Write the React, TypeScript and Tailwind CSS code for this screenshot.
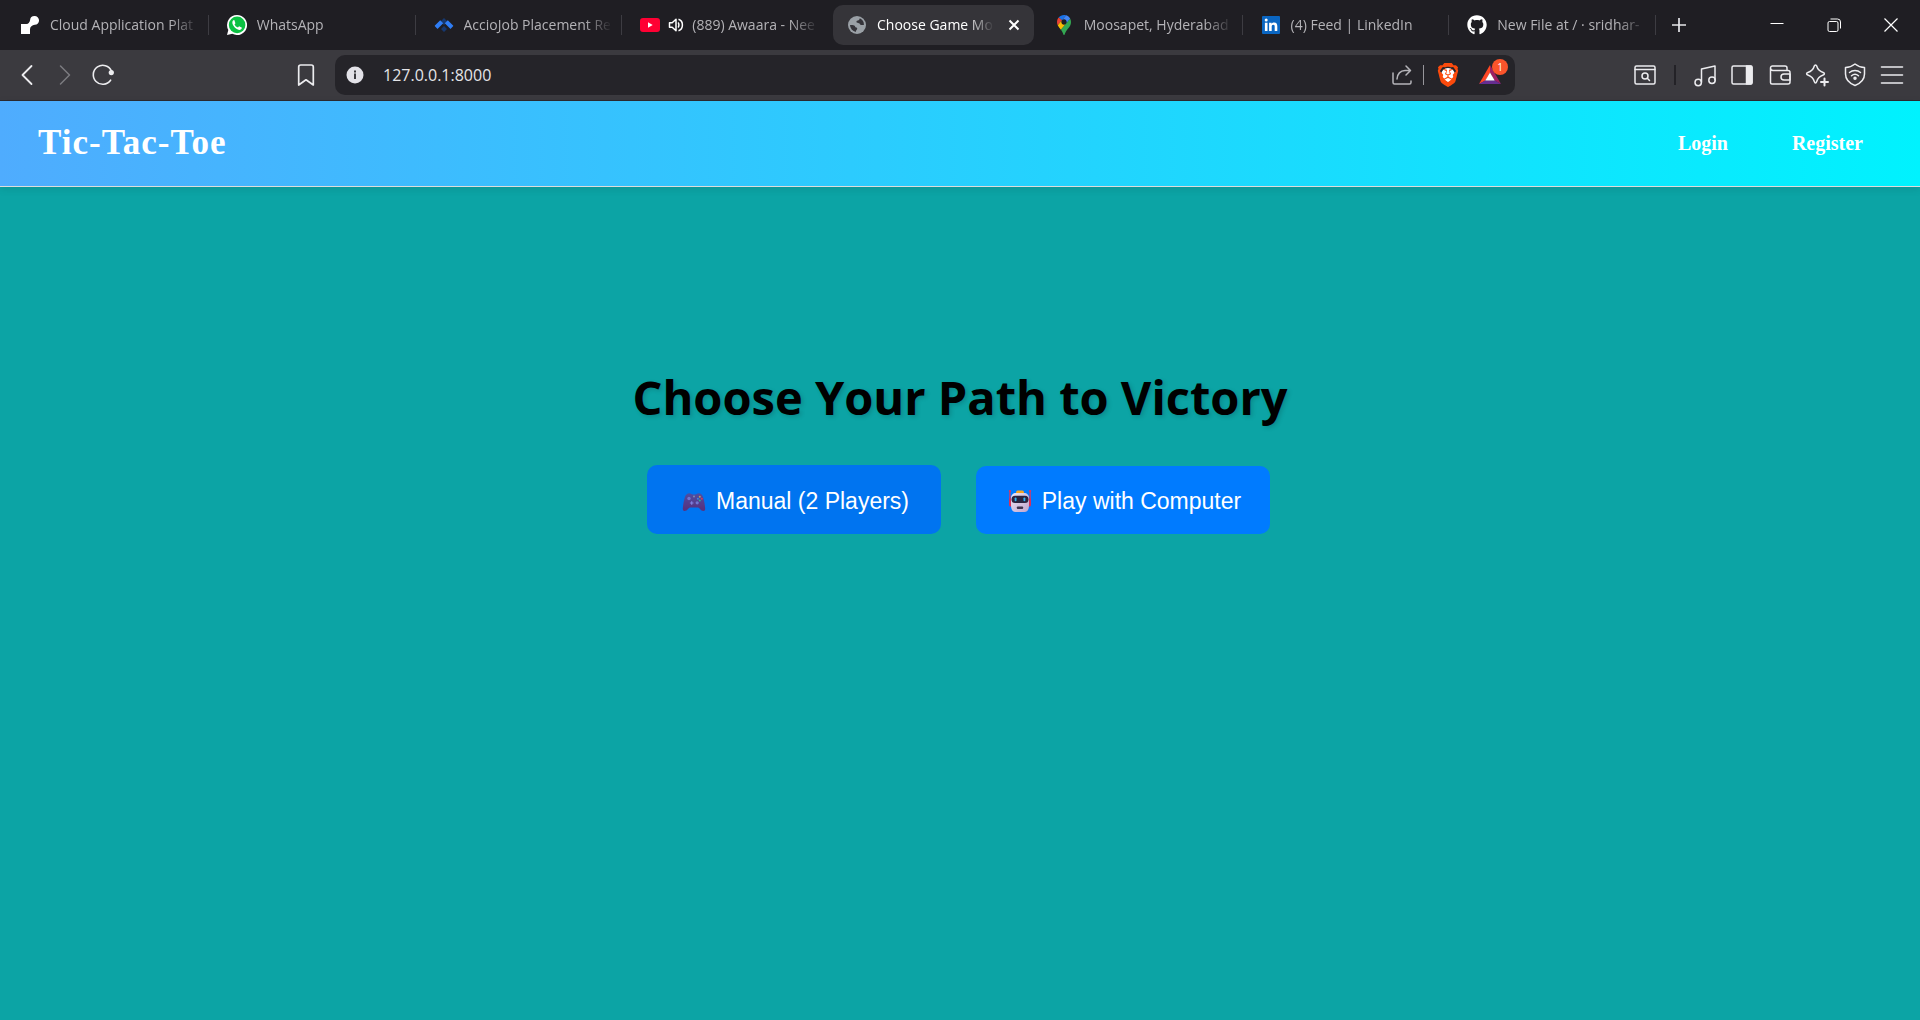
import React from "react";
import { FaGithub } from "react-icons/fa";
import { SiBrave } from "react-icons/si";

type IconProps = { children: React.ReactNode; className?: string; box?: string };

function Line({ children, className = "size-6", box = "0 0 24 24" }: IconProps) {
  return (
    <svg
      viewBox={box}
      className={className}
      fill="none"
      stroke="currentColor"
      strokeWidth="1.5"
      strokeLinecap="round"
      strokeLinejoin="round"
      aria-hidden="true"
    >
      {children}
    </svg>
  );
}

const RenderLogo = () => (
  <svg viewBox="0 0 20 20" className="size-5" fill="#fff" aria-hidden="true">
    <path d="M14.500 1a4.400 4.400 0 0 1 .3 8.800c-2.600.2-4.800 2-4.800 4.500V19H1V9h5.500c2 0 3.300-1.500 3.600-3.900A4.400 4.400 0 0 1 14.500 1z" />
  </svg>
);

const WhatsAppLogo = () => (
  <svg viewBox="0 0 20 20" className="size-5" aria-hidden="true">
    <path d="M10 0a10 10 0 1 1-4.700 18.800L0 20l1.300-5.100A10 10 0 0 1 10 0z" fill="#fff" />
    <circle cx="10.100" cy="9.900" r="8.300" fill="#0cc143" />
    <path
      d="M7.200 5.100c-.4-.1-.9.100-1.200.5-1.300 1.500-.6 3.700.8 5.600 1.500 2.100 3.600 3.500 5.500 3.700 1.200.1 2.300-.7 2.500-1.600.1-.5.100-.8-.2-.9l-2.100-1c-.3-.1-.5 0-.7.200l-.8 1c-1.600-.6-2.700-1.600-3.500-3.100l.8-1c.1-.2.100-.4 0-.6l-.8-2.300c-.1-.3-.2-.4-.3-.5z"
      fill="#fff"
    />
  </svg>
);

const AccioLogo = () => (
  <svg viewBox="0 0 20 16" className="h-4 w-5" aria-hidden="true">
    <path d="M10 1l3.500 3.500L10 8 6.500 4.500zM10 9l3 3-3 3-3-3z" fill="#16386f" />
    <path d="M6.200 3.200l3 3-5.700 5.700-2.600-2.600a.6.6 0 0 1 0-.8zM13.800 3.200l-3 3 5.700 5.700 2.600-2.600a.6.6 0 0 0 0-.8z" fill="#2f7df4" />
  </svg>
);

const YouTubeLogo = () => (
  <svg viewBox="0 0 20 14" className="h-3.5 w-5" aria-hidden="true">
    <rect width="20" height="14" rx="3" fill="#ff0033" />
    <path d="M8 4.300v5.400L12.700 7z" fill="#fff" />
  </svg>
);

const GlobeLogo = () => (
  <svg viewBox="0 0 18 18" className="size-[18px]" aria-hidden="true">
    <circle cx="9" cy="9" r="9" fill="#9aa0a6" />
    <path
      d="M11.800 2.200c-.2 1.300-.8 2-2 2.200-1.200.1-1.500.9-1.200 1.800.3.800 1.300.7 2.300 1 1.200.3 1 1.500 2.300 1.700 1 .2 2 .2 2.700.1a7 7 0 0 0-4.100-6.800zM2 9c1.700 0 3.200.1 4.200.6 1.300.7.700 1.700 2 2 1.300.2 1.200 1 .7 1.800-.4.800-1.200 1-1 2.500A7 7 0 0 1 2 9z"
      fill="#35343a"
    />
  </svg>
);

const MapsLogo = () => (
  <svg viewBox="0 0 92.3 132.3" className="h-5 w-3.5" aria-hidden="true">
    <path fill="#1a73e8" d="M60.2 2.2C55.8.8 51 0 46.1 0 32 0 19.3 6.4 10.8 16.5l21.800 18.300L60.200 2.200z" />
    <path fill="#ea4335" d="M10.8 16.5C4.1 24.5 0 34.900 0 46.100c0 8.700 1.700 15.700 4.600 22l28-33.300-21.800-18.300z" />
    <path fill="#4285f4" d="M46.2 28.5c9.800 0 17.700 7.900 17.700 17.700 0 4.300-1.600 8.300-4.200 11.400 0 0 13.900-16.600 27.500-32.700-5.600-10.800-15.300-19-27-22.700L32.600 34.800c3.300-3.800 8.100-6.300 13.600-6.300" />
    <path fill="#fbbc04" d="M46.2 63.8c-9.800 0-17.700-7.900-17.700-17.700 0-4.300 1.500-8.300 4.100-11.300l-28 33.300c4.800 10.600 12.800 19.200 21 29.900l34.100-40.500c-3.300 3.900-8.100 6.300-13.500 6.300" />
    <path fill="#34a853" d="M59.1 109.2c15.400-24.100 33.300-35 33.300-63 0-7.700-1.900-14.900-5.200-21.300L25.600 98c2.600 3.400 5.300 7.300 7.900 11.300 9.400 14.500 6.800 23.100 12.800 23.100s3.400-8.700 12.800-23.200" />
  </svg>
);

const LinkedInLogo = () => (
  <svg viewBox="0 0 18 18" className="size-[18px]" aria-hidden="true">
    <rect width="18" height="18" rx="1" fill="#0a66c2" />
    <circle cx="4.200" cy="4" r="1.500" fill="#fff" />
    <path
      d="M2.900 6.700h2.600V15H2.900zM7.100 6.700h2.500v1.200c.5-.9 1.400-1.400 2.600-1.400 2.300 0 3.100 1.500 3.100 3.700V15h-2.600v-4.300c0-1.100-.2-2-1.400-2-1.200 0-1.600.9-1.600 2V15H7.100z"
      fill="#fff"
    />
  </svg>
);

const SpeakerIcon = () => (
  <svg viewBox="0 0 16 16" className="size-4" fill="none" stroke="#fff" strokeWidth="1.5" aria-hidden="true">
    <path d="M1.500 5.700h2.700L8 2.300v11.400l-3.800-3.400H1.500z" strokeLinejoin="round" />
    <path d="M10 5.500c1.200.9 1.200 4.100 0 5M10.500 2.300c5.200 1.500 5.200 9.900 0 11.400" />
  </svg>
);

type Tab = {
  title: string;
  icon: React.ReactNode;
  active?: boolean;
  audible?: boolean;
  divider?: boolean;
};

const tabs: Tab[] = [
  { title: "Cloud Application Plat", icon: <RenderLogo />, divider: true },
  { title: "WhatsApp", icon: <WhatsAppLogo />, divider: true },
  { title: "AccioJob Placement Re", icon: <AccioLogo />, divider: true },
  { title: "(889) Awaara - Nee", icon: <YouTubeLogo />, audible: true },
  { title: "Choose Game Mo", icon: <GlobeLogo />, active: true },
  { title: "Moosapet, Hyderabad", icon: <MapsLogo />, divider: true },
  { title: "(4) Feed | LinkedIn", icon: <LinkedInLogo />, divider: true },
  { title: "New File at / · sridhar-", icon: <FaGithub className="size-5 text-white" />, divider: true },
];

function TabItem({ tab }: { tab: Tab }) {
  const shell = tab.active ? "bg-[#353439] text-white" : "text-[#b4b3b7]";
  return (
    <div className="flex h-10 min-w-0 flex-1 items-center">
      <div className={"ml-1 mr-px flex h-10 min-w-0 flex-1 items-center rounded-[10px] pl-3 " + shell}>
        <button type="button" className="flex min-w-0 flex-1 items-center text-left">
          <span className="flex w-6 shrink-0 items-center justify-center">{tab.icon}</span>
          {tab.audible && (
            <span className="ml-1.5 shrink-0">
              <SpeakerIcon />
            </span>
          )}
          <span className="ml-2 min-w-0 flex-1 overflow-hidden whitespace-nowrap [mask-image:linear-gradient(to_right,black_calc(100%-28px),transparent)]">
            {tab.title}
          </span>
        </button>
        {tab.active ? (
          <button type="button" aria-label="Close tab" className="ml-2 mr-2 flex size-6 items-center justify-center">
            <svg viewBox="0 0 12 12" className="size-3" stroke="#fff" strokeWidth="2" aria-hidden="true">
              <path d="M1.500 1.500l9 9M10.500 1.500l-9 9" />
            </svg>
          </button>
        ) : (
          <span className="w-2" />
        )}
      </div>
      <span className={"h-5 w-px " + (tab.divider ? "bg-[#3d3c42]" : "")} />
    </div>
  );
}

function TabStrip() {
  return (
    <div className="flex h-[50px] items-center bg-[#1f1e23] pl-0.5 text-sm text-white">
      <div className="flex min-w-0 flex-1">
        {tabs.map((t) => (
          <TabItem key={t.title} tab={t} />
        ))}
      </div>
      <div className="flex w-[264px] shrink-0 items-center pr-px">
        <button type="button" aria-label="New tab" className="ml-[11px] flex size-6 items-center justify-center">
          <svg viewBox="0 0 14 14" className="size-3.5" stroke="#e6e6e9" strokeWidth="1.700" aria-hidden="true">
            <path d="M7 0v14M0 7h14" />
          </svg>
        </button>
        <div className="ml-auto flex">
          <button type="button" aria-label="Minimize" className="flex h-10 w-[57px] items-center justify-center">
            <svg viewBox="0 0 14 14" className="size-3.5" stroke="#fff" aria-hidden="true">
              <path d="M0.500 5.500h13" />
            </svg>
          </button>
          <button type="button" aria-label="Restore" className="flex h-10 w-[57px] items-center justify-center">
            <svg viewBox="0 0 14 14" className="size-3.5" fill="none" stroke="#fff" aria-hidden="true">
              <rect x="1" y="3.500" width="10" height="10" rx="1.500" />
              <path d="M3.500 1h7a3 3 0 0 1 3 3v6.500" />
            </svg>
          </button>
          <button type="button" aria-label="Close" className="flex h-10 w-[57px] items-center justify-center">
            <svg viewBox="0 0 14 14" className="size-3.5" stroke="#fff" strokeWidth="1.200" aria-hidden="true">
              <path d="M0.500 0.500l13 13M13.500 0.500l-13 13" />
            </svg>
          </button>
        </div>
      </div>
    </div>
  );
}

const BatLogo = () => (
  <svg viewBox="0 0 24 20" className="h-5 w-6" aria-hidden="true">
    <path d="M12 0L1 19l6.500-3.500L12 7.500z" fill="#ff4724" />
    <path d="M12 0l11 19-6.500-3.500L12 7.500z" fill="#9e1f63" />
    <path d="M1 19h22l-6.500-3.800h-9z" fill="#662d91" />
    <path d="M12 7.500l4.700 8H7.300z" fill="#fff" />
  </svg>
);

function NavButton({ label, children }: { label: string; children: React.ReactNode }) {
  return (
    <button type="button" aria-label={label} className="flex h-10 w-[38px] shrink-0 items-center justify-center">
      {children}
    </button>
  );
}

function Toolbar() {
  return (
    <div className="flex h-[51px] items-center border-b border-[#2c2b30] bg-[#3b3a3f] text-[#ececef]">
      <div className="flex w-[335px] shrink-0 items-center pl-2 pr-2.5">
        <NavButton label="Back">
          <Line><path d="M16.500 3L7.500 12l9 9" strokeWidth="1.800" /></Line>
        </NavButton>
        <NavButton label="Forward">
          <Line className="size-6 text-[#7c7b80]"><path d="M7.500 3l9 9-9 9" /></Line>
        </NavButton>
        <NavButton label="Reload">
          <Line>
            <path d="M19.600 17.200A9.500 9.500 0 1 1 20.500 8" strokeWidth="1.600" />
            <circle cx="20.300" cy="9.600" r="2.600" fill="currentColor" stroke="none" />
          </Line>
        </NavButton>
        <span className="flex-1" />
        <NavButton label="Bookmark">
          <Line><path d="M4.700 22V4a2 2 0 0 1 2-2h10.600a2 2 0 0 1 2 2v18L12 16.800z" strokeWidth="1.700" /></Line>
        </NavButton>
      </div>

      <div className="flex h-10 min-w-0 flex-1 items-center rounded-[10px] bg-[#252429] pl-2.5 pr-3">
        <button type="button" aria-label="Site information" className="flex size-5 items-center justify-center">
          <svg viewBox="0 0 18 18" className="size-[18px]" aria-hidden="true">
            <circle cx="9" cy="9" r="8.500" fill="#e3e2e8" />
            <path d="M8 7.500h2v5.500H8zM8 4.500h2v2H8z" fill="#3b3a3f" />
          </svg>
        </button>
        <input
          aria-label="Address"
          defaultValue="127.0.0.1:8000"
          className="ml-[18px] min-w-0 flex-1 bg-transparent text-base text-[#e4e4e8] outline-none"
        />
        <button type="button" aria-label="Share" className="flex size-6 items-center justify-center text-[#b5b4b9]">
          <Line>
            <path d="M3 10v9.500a1.500 1.500 0 0 0 1.500 1.500h15a1.500 1.500 0 0 0 1.500-1.500V18" />
            <path d="M7 16c.2-5 3.500-8.500 8-8.500h5M16 3l4.500 4.500L16 12" />
          </Line>
        </button>
        <span className="mx-[9px] h-5 w-px bg-[#97969b]" />
        <button type="button" aria-label="Brave Shields" className="ml-[3px] flex size-6 items-center justify-center">
          <span className="relative flex size-6 items-center justify-center">
            <span className="absolute size-3.5 rounded-full bg-white" />
            <SiBrave className="relative size-6 text-[#fb4a0c]" />
          </span>
        </button>
        <button type="button" aria-label="Brave Rewards" className="relative ml-[18px] mr-px flex size-6 items-center justify-center">
          <BatLogo />
          <span className="absolute -top-1 left-3.5 flex size-4 items-center justify-center rounded-full bg-[#fb542b] text-[10px] leading-none text-white">
            1
          </span>
        </button>
      </div>

      <div className="flex w-[405px] shrink-0 items-center justify-end pr-4">
        <button type="button" aria-label="Search tabs">
          <Line>
            <rect x="2" y="3" width="20" height="18" rx="1.500" />
            <path d="M2 6.500h20" strokeWidth="1.300" />
            <circle cx="12" cy="13" r="3" />
            <path d="M14.300 15.300L16.500 17.500" />
          </Line>
        </button>
        <span className="mx-[17px] h-5 w-0.5 bg-[#232227]" />
        <div className="flex w-[211px] items-center justify-between">
          <button type="button" aria-label="Playlist">
            <Line>
              <circle cx="5.200" cy="19.500" r="3.200" />
              <circle cx="19" cy="17.300" r="3.200" />
              <path d="M8.500 19V6L22 3v14" />
            </Line>
          </button>
          <button type="button" aria-label="Sidebar">
            <Line>
              <rect x="2" y="3" width="20" height="18" rx="1.500" />
              <path d="M16.500 3h4a1.500 1.500 0 0 1 1.500 1.500v15a1.500 1.500 0 0 1-1.500 1.500h-4z" fill="currentColor" />
            </Line>
          </button>
          <button type="button" aria-label="Wallet">
            <Line>
              <path d="M2.500 5v14.500A1.500 1.500 0 0 0 4 21h16a2 2 0 0 0 2-2V9.500a2 2 0 0 0-2-2H5A2.500 2.500 0 0 1 2.500 5 2 2 0 0 1 4.500 3H17a2 2 0 0 1 2 2v2.500" />
              <path d="M22 11h-6a3 3 0 0 0 0 6h6z" />
            </Line>
          </button>
          <button type="button" aria-label="Leo AI">
            <Line>
              <path d="M10.500 2c.8 0 1 .3 1.200 1 .9 3.300 2 5 6.500 6.500 1.600.5 1.600 2 0 2.500-4.500 1.500-5.600 3.200-6.500 6.500-.2.700-.4 1.500-1.200 1.500s-1-.8-1.200-1.500C8.400 15.200 7.300 13.500 2.800 12c-1.600-.5-1.600-2 0-2.500C7.300 8 8.400 6.300 9.300 3c.2-.7.4-1 1.200-1z" />
              <path d="M19.500 15.500v7M16 19h7" strokeWidth="2" />
            </Line>
          </button>
          <button type="button" aria-label="VPN">
            <Line>
              <path d="M12 1c2.500 2 6 3.500 9.500 3.500v6.500c0 5.500-4.500 9.500-9.500 11.500C7 20.500 2.500 16.500 2.500 11V4.500C6 4.500 9.500 3 12 1z" />
              <path d="M6.500 9.500c3-2.600 8-2.600 11 0M8.500 12.700c2-1.700 5-1.700 7 0" />
              <circle cx="12" cy="15.300" r="1" fill="currentColor" />
            </Line>
          </button>
          <button type="button" aria-label="Menu">
            <Line><path d="M1.500 4h21M1.500 12h21M1.500 20h21" strokeWidth="1.600" /></Line>
          </button>
        </div>
      </div>
    </div>
  );
}

const GamepadIcon = () => (
  <svg viewBox="0 0 24 24" className="size-6 opacity-90" aria-hidden="true">
    <defs>
      <linearGradient id="pad" x1="0" y1="0" x2="0" y2="1">
        <stop offset="0" stopColor="#574b9c" />
        <stop offset="1" stopColor="#63286f" />
      </linearGradient>
    </defs>
    <path
      d="M5 5c1-1 3-1.200 4-.2.600.5 1 .7 3 .7s2.400-.2 3-.7c1-1 3-.8 4 .2 1 .9 1.600 1.500 2.200 3.500.9 3 1.800 7.500 2 11 .1 1.700-.6 2.500-1.700 2.500-1.500 0-2.500-.8-3.700-2.200-.8-.9-1.400-1.200-2.800-1.200H9c-1.400 0-2 .3-2.800 1.200C5 21.200 4 22 2.500 22 1.400 22 .7 21.200.8 19.500c.2-3.500 1.100-8 2-11C3.400 6.500 4 5.900 5 5z"
      fill="url(#pad)"
    />
    <circle cx="7" cy="9.500" r="1.700" fill="#7d76cf" />
    <circle cx="15.200" cy="13.800" r="1.600" fill="#7d76cf" />
    <path d="M9.700 12.200v3.600M7.900 14h3.600" stroke="#8f86e0" strokeWidth="1.200" />
    <circle cx="12" cy="7.500" r="1" fill="#8d8fa8" />
    <circle cx="17.800" cy="7.700" r="1" fill="#d3a245" />
    <circle cx="19.800" cy="9.700" r="1" fill="#ea3550" />
    <circle cx="15.900" cy="9.700" r="1" fill="#3e8ce0" />
    <circle cx="17.800" cy="11.500" r="1" fill="#39b58a" />
  </svg>
);

const RobotIcon = () => (
  <svg viewBox="0 0 24 24" className="size-6" aria-hidden="true">
    <defs>
      <linearGradient id="bot" x1="0" y1="0" x2="1" y2="1">
        <stop offset="0" stopColor="#eee6f5" />
        <stop offset="1" stopColor="#bea4cd" />
      </linearGradient>
    </defs>
    <path d="M1.900 2v13M22.100 2v13" stroke="#e2355f" strokeWidth="1.200" />
    <path d="M1 9.500h3v8H2.500A1.500 1.500 0 0 1 1 16zM23 9.500h-3v8h1.500A1.500 1.500 0 0 0 23 16z" fill="#d6305c" />
    <circle cx="1.900" cy="2" r="1.100" fill="#e2355f" />
    <circle cx="22.100" cy="2" r="1.100" fill="#e2355f" />
    <path d="M8 4c0-1.500.5-2.500 1.500-2.500h5C15.500 1.500 16 2.500 16 4z" fill="#f5a623" />
    <path d="M8 4h8c3 0 5 2 5 5v7c0 4.500-1.500 7-4.500 7h-9C4.500 23 3 20.500 3 16V9c0-3 2-5 5-5z" fill="url(#bot)" />
    <rect x="3.500" y="6.700" width="17" height="7.300" rx="3.500" fill="#2b2440" />
    <rect x="6.700" y="8.500" width="1.800" height="3.800" rx="0.800" fill="#31b4f2" />
    <rect x="15.500" y="8.500" width="1.800" height="3.800" rx="0.800" fill="#31b4f2" />
    <rect x="8.900" y="17.500" width="6.200" height="2.600" rx="0.800" fill="#40334f" />
  </svg>
);

function Page() {
  return (
    <div className="flex flex-1 flex-col bg-[#0ca4a5]">
      <nav className="flex items-center justify-between border-b border-[#dddddd] bg-[linear-gradient(to_right,#4facfe,#00f2fe)] pb-[21px] pl-[38px] pr-[57px] pt-[19px] font-['Liberation_Serif',serif] font-bold text-white shadow-[0_2px_8px_rgba(0,0,0,0.1)]">
        <a href="#home" className="text-[35px] leading-[45px] tracking-[1px]">Tic-Tac-Toe</a>
        <div className="flex items-center gap-16 text-xl">
          <a href="#login">Login</a>
          <a href="#register">Register</a>
        </div>
      </nav>
      <main className="flex flex-col items-center pt-[178px] font-['Liberation_Sans',sans-serif]">
        <h1 className="font-['Open_Sans',sans-serif] text-[47px] font-bold leading-[64px] text-black [text-shadow:2px_2px_4px_rgba(0,0,0,0.15)]">
          Choose Your Path to Victory
        </h1>
        <div className="mr-1 mt-9 flex items-center gap-[35px] text-[23px] leading-7 text-white">
          <button type="button" className="flex h-[69px] w-[294px] items-center justify-center gap-2.5 rounded-[10px] bg-[#0074f0] pl-1 pt-0.5">
            <GamepadIcon />
            Manual (2 Players)
          </button>
          <button type="button" className="flex h-[68px] w-[294px] items-center justify-center gap-2.5 rounded-[10px] bg-[#007bff] pl-1 pt-0.5">
            <RobotIcon />
            Play with Computer
          </button>
        </div>
      </main>
    </div>
  );
}

export default function App() {
  return (
    <div className="flex min-h-screen flex-col font-['Open_Sans',sans-serif]">
      <TabStrip />
      <Toolbar />
      <Page />
    </div>
  );
}
